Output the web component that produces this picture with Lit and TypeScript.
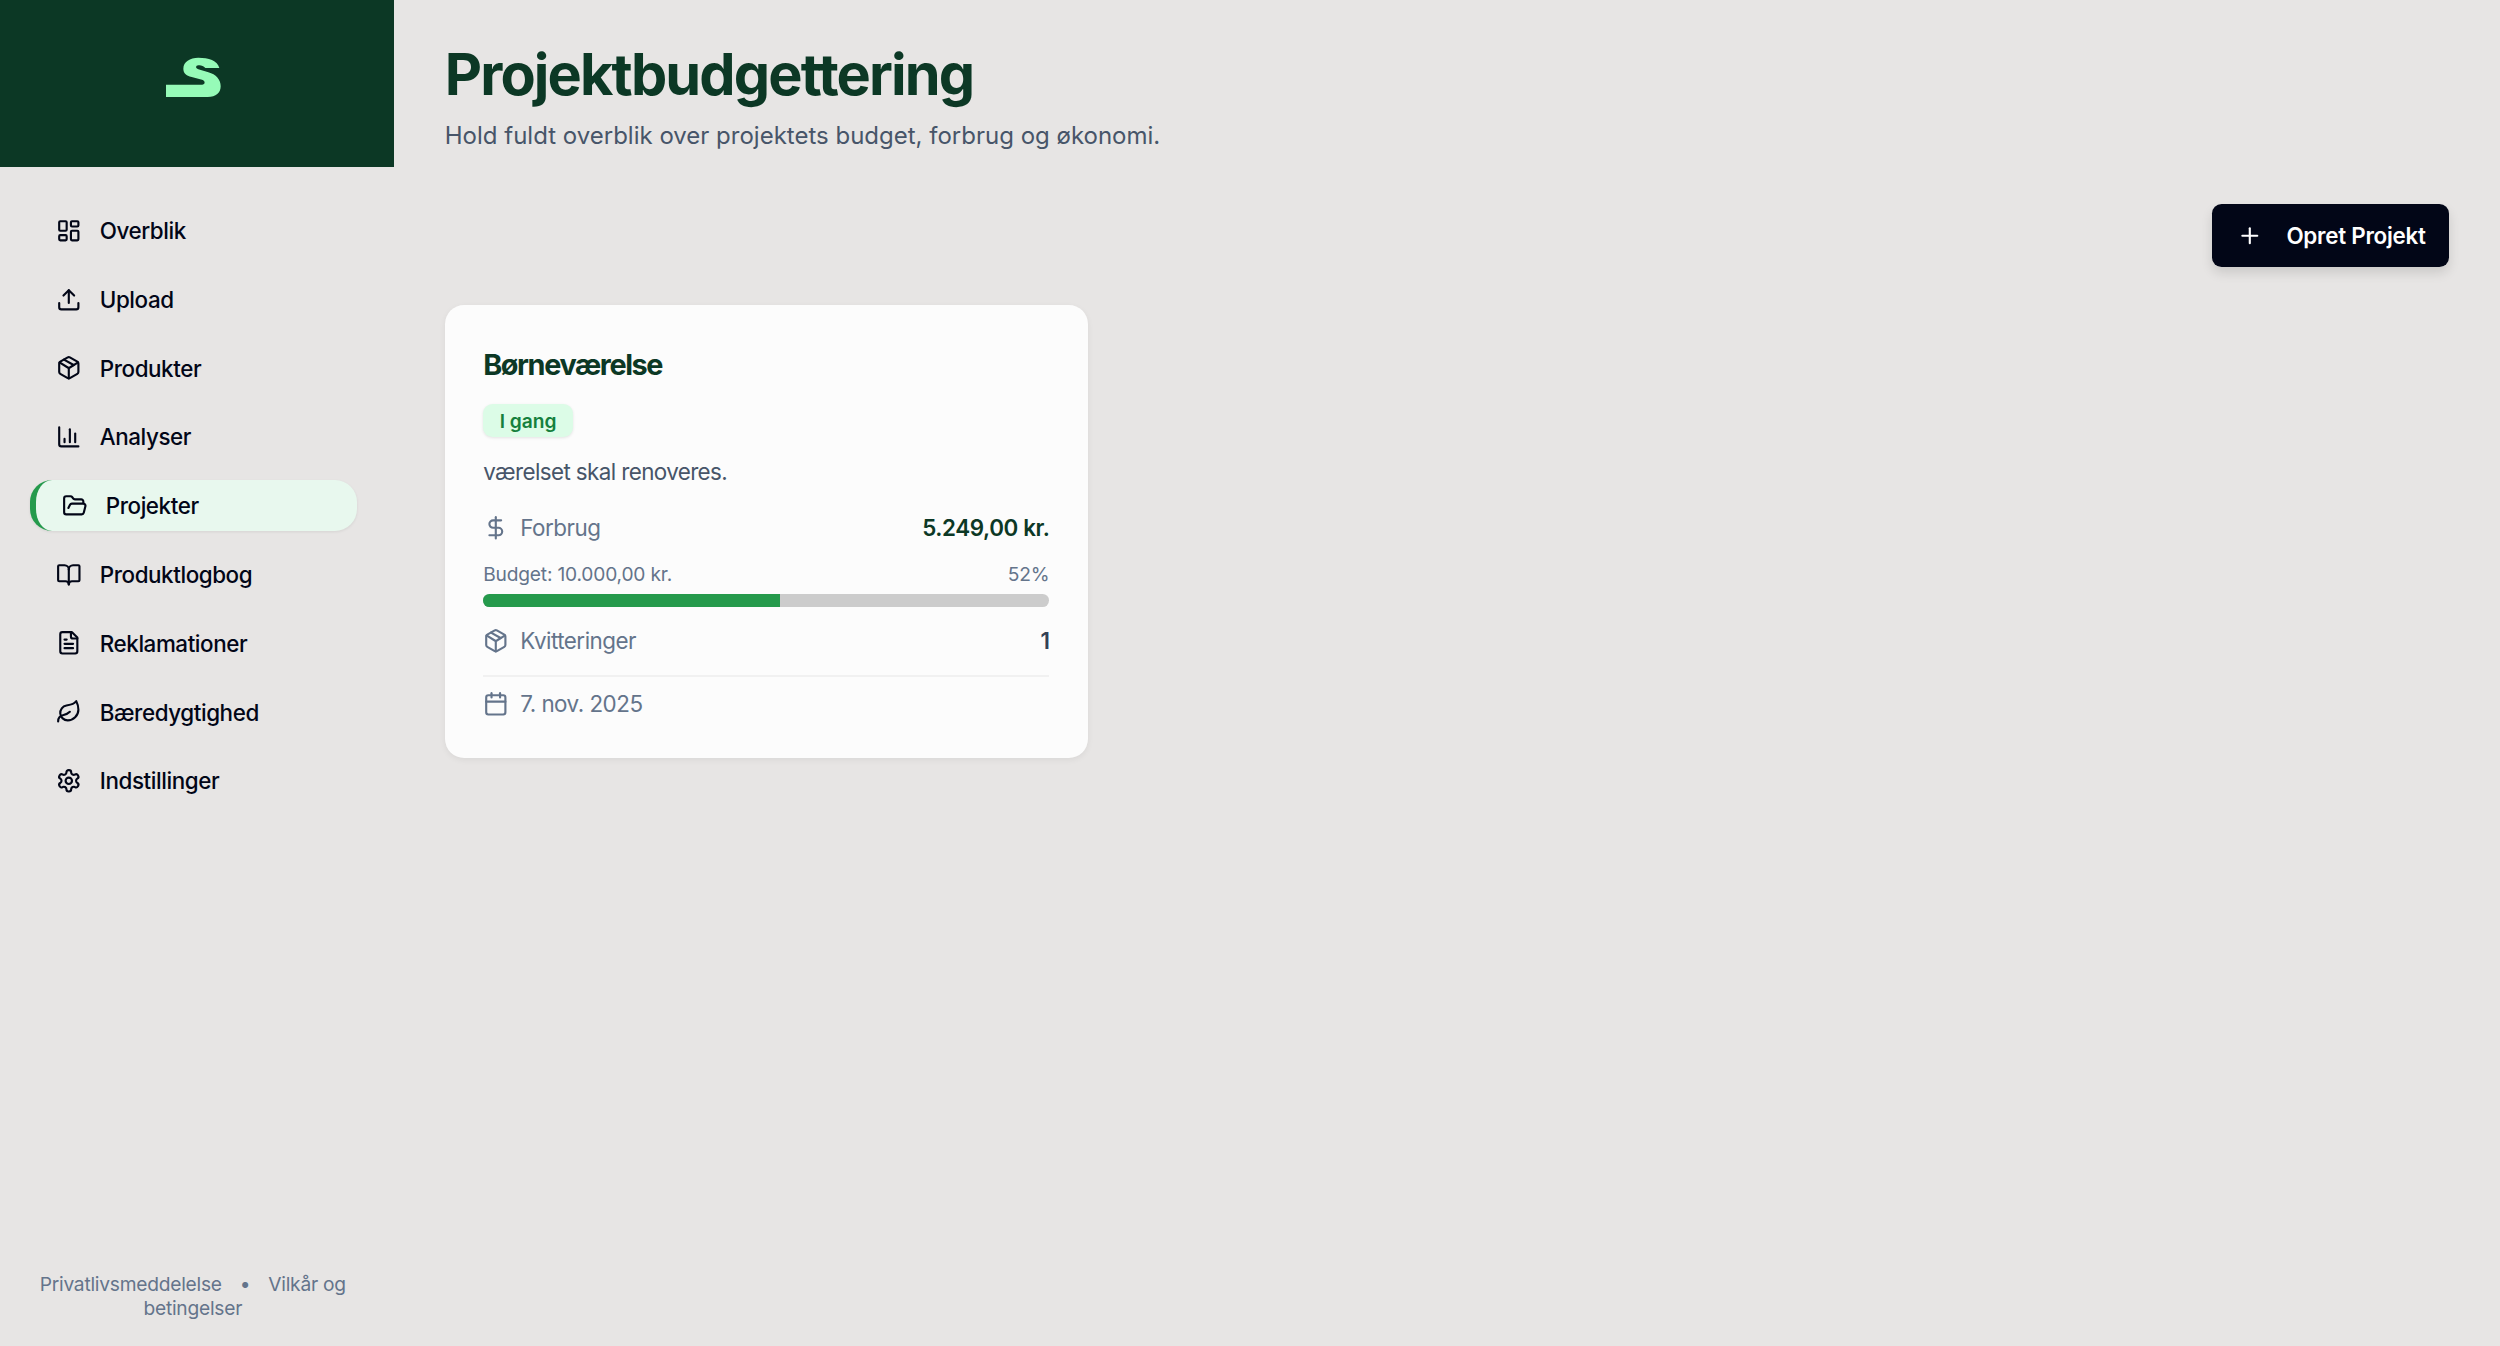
import { LitElement, html, css, svg } from "lit";
import { customElement } from "lit/decorators.js";

const icons: Record<string, unknown> = {
  dash: svg`<rect x="3" y="3" width="7" height="9" rx="1"/><rect x="14" y="3" width="7" height="5" rx="1"/><rect x="14" y="12" width="7" height="9" rx="1"/><rect x="3" y="16" width="7" height="5" rx="1"/>`,
  upload: svg`<path d="M21 15v4a2 2 0 0 1-2 2H5a2 2 0 0 1-2-2v-4"/><polyline points="17 8 12 3 7 8"/><line x1="12" y1="3" x2="12" y2="15"/>`,
  pkg: svg`<path d="M11 21.73a2 2 0 0 0 2 0l7-4A2 2 0 0 0 21 16V8a2 2 0 0 0-1-1.73l-7-4a2 2 0 0 0-2 0l-7 4A2 2 0 0 0 3 8v8a2 2 0 0 0 1 1.73z"/><path d="M12 22V12"/><path d="m3.3 7 7.703 4.734a2 2 0 0 0 1.994 0L20.7 7"/><path d="m7.5 4.27 9 5.15"/>`,
  chart: svg`<path d="M3 3v16a2 2 0 0 0 2 2h16"/><path d="M18 17V9"/><path d="M13 17V5"/><path d="M8 17v-3"/>`,
  folder: svg`<path d="m6 14 1.5-2.9A2 2 0 0 1 9.24 10H20a2 2 0 0 1 1.94 2.5l-1.54 6a2 2 0 0 1-1.95 1.5H4a2 2 0 0 1-2-2V5a2 2 0 0 1 2-2h3.9a2 2 0 0 1 1.69.9l.81 1.2a2 2 0 0 0 1.67.9H18a2 2 0 0 1 2 2v2"/>`,
  book: svg`<path d="M12 7v14"/><path d="M3 18a1 1 0 0 1-1-1V4a1 1 0 0 1 1-1h5a4 4 0 0 1 4 4 4 4 0 0 1 4-4h5a1 1 0 0 1 1 1v13a1 1 0 0 1-1 1h-6a3 3 0 0 0-3 3 3 3 0 0 0-3-3z"/>`,
  file: svg`<path d="M15 2H6a2 2 0 0 0-2 2v16a2 2 0 0 0 2 2h12a2 2 0 0 0 2-2V7Z"/><path d="M14 2v4a2 2 0 0 0 2 2h4"/><path d="M10 9H8"/><path d="M16 13H8"/><path d="M16 17H8"/>`,
  leaf: svg`<path d="M11 20A7 7 0 0 1 9.8 6.1C15.5 5 17 4.48 19 2c1 2 2 4.18 2 8 0 5.5-4.78 10-10 10Z"/><path d="M2 21c0-3 1.85-5.36 5.08-6C9.5 14.52 12 13 13 12"/>`,
  gear: svg`<path d="M12.22 2h-.44a2 2 0 0 0-2 2v.18a2 2 0 0 1-1 1.73l-.43.25a2 2 0 0 1-2 0l-.15-.08a2 2 0 0 0-2.73.73l-.22.38a2 2 0 0 0 .73 2.73l.15.1a2 2 0 0 1 1 1.72v.51a2 2 0 0 1-1 1.74l-.15.09a2 2 0 0 0-.73 2.73l.22.38a2 2 0 0 0 2.73.73l.15-.08a2 2 0 0 1 2 0l.43.25a2 2 0 0 1 1 1.73V20a2 2 0 0 0 2 2h.44a2 2 0 0 0 2-2v-.18a2 2 0 0 1 1-1.73l.43-.25a2 2 0 0 1 2 0l.15.08a2 2 0 0 0 2.73-.73l.22-.39a2 2 0 0 0-.73-2.73l-.15-.08a2 2 0 0 1-1-1.74v-.5a2 2 0 0 1 1-1.74l.15-.09a2 2 0 0 0 .73-2.73l-.22-.38a2 2 0 0 0-2.73-.73l-.15.08a2 2 0 0 1-2 0l-.43-.25a2 2 0 0 1-1-1.73V4a2 2 0 0 0-2-2z"/><circle cx="12" cy="12" r="3"/>`,
  dollar: svg`<line x1="12" y1="2" x2="12" y2="22"/><path d="M17 5H9.5a3.5 3.5 0 0 0 0 7h5a3.5 3.5 0 0 1 0 7H6"/>`,
  cal: svg`<path d="M8 2v4"/><path d="M16 2v4"/><rect x="3" y="4" width="18" height="18" rx="2"/><path d="M3 10h18"/>`,
  plus: svg`<path d="M5 12h14"/><path d="M12 5v14"/>`,
};

const icon = (name: string) => html`<svg class="icon" viewBox="0 0 24 24" fill="none" stroke="currentColor" stroke-width="2" stroke-linecap="round" stroke-linejoin="round">${icons[name]}</svg>`;

const nav = [
  ["dash", "Overblik"], ["upload", "Upload"], ["pkg", "Produkter"], ["chart", "Analyser"],
  ["folder", "Projekter"], ["book", "Produktlogbog"], ["file", "Reklamationer"],
  ["leaf", "Bæredygtighed"], ["gear", "Indstillinger"],
];

@customElement("app-root")
export class AppRoot extends LitElement {
  static styles = css`
    :host { display: flex; min-height: 1346px; background: #e7e5e4; color: #020617; font-family: Inter, "Liberation Sans", sans-serif; }
    * { box-sizing: border-box; }
    .icon { width: 25.6px; height: 25.6px; flex: none; display: block; }
    .sidebar { width: 393.6px; flex: none; display: flex; flex-direction: column; }
    .brand { height: 167.4px; background: #0c3825; display: flex; align-items: center; justify-content: center; padding: 0 7px 13.6px 0; }
    .brand svg { width: 54.7px; height: 40px; display: block; }
    nav { display: flex; flex-direction: column; gap: 17.6px; padding: 37.6px 37px 0 30.4px; }
    .item { height: 51.2px; display: flex; align-items: center; gap: 18.2px; padding-left: 25.6px; font-size: 22.4px; font-weight: 500; border-radius: 22px; letter-spacing: -0.42px; }
    .item.active { background: #e8f8ee; border-left: 6.4px solid #259a4c; box-shadow: 0 1px 3px rgba(0,0,0,.08); }
    .foot { margin-top: auto; padding: 0 44px 26.5px 36px; text-align: center; font-size: 19.2px; line-height: 24px; color: #64748b; letter-spacing: -0.24px; }
    .dot { margin: 0 18px; }
    main { flex: 1; min-width: 0; padding: 0 51.2px; display: flex; flex-direction: column; }
    h1 { margin: 38px 0 0; font-size: 57.6px; line-height: 72px; font-weight: 700; color: #0c3825; letter-spacing: -1.87px; }
    .sub { margin: 7.5px 0 0; font-size: 24px; line-height: 36px; color: #475569; }
    .actions { display: flex; justify-content: flex-end; margin-top: 50.5px; }
    .btn { height: 63px; width: 237px; display: flex; align-items: center; gap: 24px; padding-left: 25px; background: #020617; color: #fff; border: 0; border-radius: 9.6px; font: 600 22.4px Inter, "Liberation Sans", sans-serif; letter-spacing: -0.25px; box-shadow: 0 6px 12px rgba(0,0,0,.12); }
    .grid { margin-top: 38px; display: grid; grid-template-columns: 643px; }
    .card { background: #fcfcfc; border-radius: 19.2px; padding: 38.4px; box-shadow: 0 2px 6px rgba(0,0,0,.06); }
    h2 { margin: 0; font-size: 28.8px; line-height: 44.8px; font-weight: 700; color: #0c3825; letter-spacing: -1.4px; }
    .badge { display: inline-flex; align-items: center; height: 33px; margin-top: 16px; padding: 0 16.5px; background: #dcfce7; color: #15803d; border-radius: 9.6px; font-size: 19.2px; font-weight: 600; box-shadow: 0 1px 3px rgba(0,0,0,.1); vertical-align: top; }
    .desc { margin: 18.5px 0 0; font-size: 22.4px; line-height: 32px; color: #475569; letter-spacing: -0.6px; }
    .row { display: flex; align-items: center; justify-content: space-between; height: 32px; color: #64748b; font-size: 22.4px; letter-spacing: -0.5px; }
    .label { display: flex; align-items: center; gap: 11.5px; }
    .forbrug { margin-top: 24px; }
    .amount { font-weight: 600; color: #0c3825; letter-spacing: -0.4px; }
    .count { font-weight: 600; color: #334155; }
    .budget { display: flex; justify-content: space-between; margin-top: 18.5px; font-size: 19.2px; line-height: 25.6px; color: #64748b; letter-spacing: -0.19px; }
    .track { margin-top: 6px; height: 12.8px; background: #ccc; border-radius: 6.4px; overflow: hidden; }
    .fill { height: 100%; background: #259a4c; }
    .kv { margin-top: 18px; }
    .date { height: 32px; margin-top: 11px; display: flex; align-items: center; gap: 11.5px; color: #64748b; font-size: 22.4px; letter-spacing: -0.5px; }
    hr { margin: 18.5px 0 0; border: 0; height: 1.6px; background: #f1f1f1; }
  `;

  render() {
    const spent = 52.49;
    return html`
      <aside class="sidebar">
        <div class="brand">
          <svg viewBox="0 0 164 120" aria-label="logo">
            <path fill="#96fbb8" d="M52 35 C52 14 72 2 97 2 C127 2 155 10 160 33 L118 33 C112 26 104 24 97 25 C88 26 88 34 97 37 L127 46 C150 52 164 68 164 88 C164 108 150 120 125 120 L0 120 L0 83 L108 83 C118 83 119 71 108 68 L77 60 C60 56 52 48 52 35 Z"/>
          </svg>
        </div>
        <nav>
          ${nav.map(([i, t]) => html`<div class="item ${t === "Projekter" ? "active" : ""}">${icon(i)}<span>${t}</span></div>`)}
        </nav>
        <div class="foot">Privatlivsmeddelelse<span class="dot">•</span>Vilkår og betingelser</div>
      </aside>
      <main>
        <h1>Projektbudgettering</h1>
        <p class="sub">Hold fuldt overblik over projektets budget, forbrug og økonomi.</p>
        <div class="actions"><button class="btn">${icon("plus")}<span>Opret Projekt</span></button></div>
        <div class="grid">
          <article class="card">
            <h2>Børneværelse</h2>
            <span class="badge">I gang</span>
            <p class="desc">værelset skal renoveres.</p>
            <div class="row forbrug"><span class="label">${icon("dollar")}Forbrug</span><span class="amount">5.249,00 kr.</span></div>
            <div class="budget"><span>Budget: 10.000,00 kr.</span><span>52%</span></div>
            <div class="track"><div class="fill" style="width:${spent}%"></div></div>
            <div class="row kv"><span class="label">${icon("pkg")}Kvitteringer</span><span class="count">1</span></div>
            <hr />
            <div class="date">${icon("cal")}7. nov. 2025</div>
          </article>
        </div>
      </main>
    `;
  }
}
